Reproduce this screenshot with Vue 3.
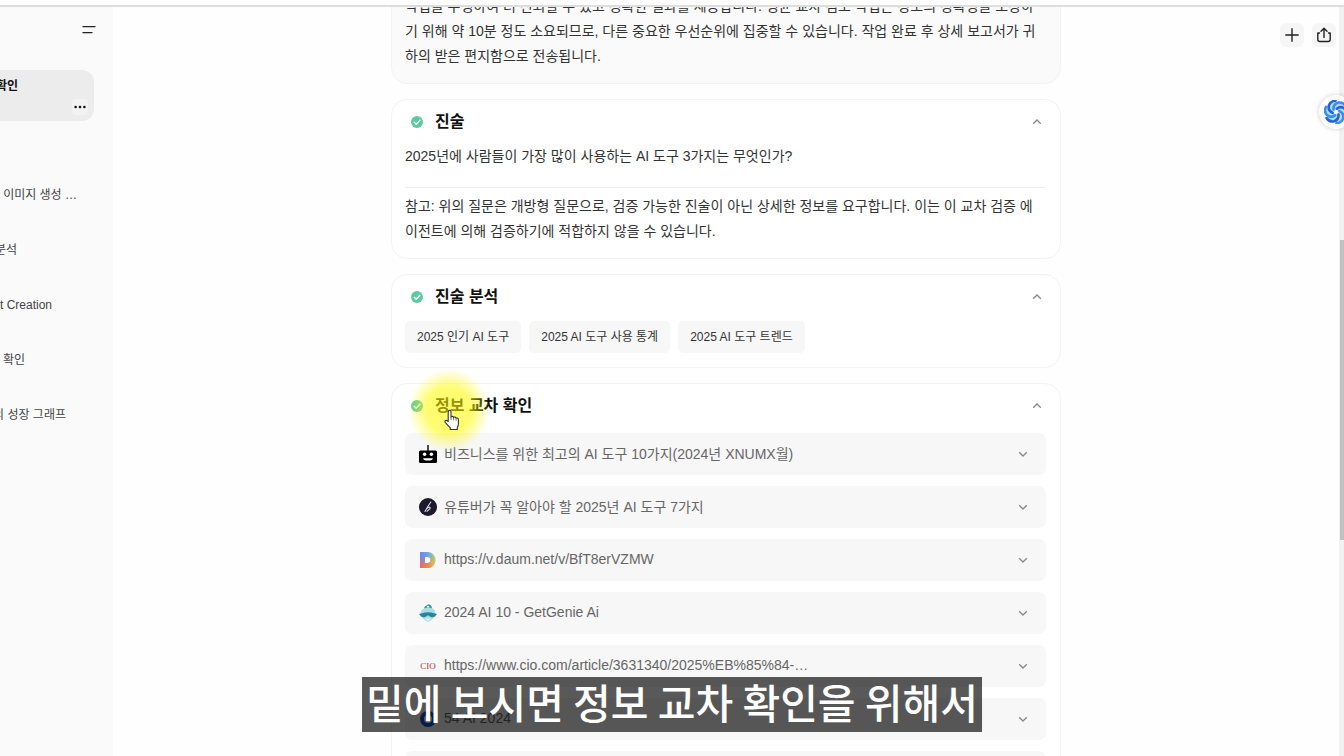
<script setup>
import { ref } from 'vue'

const history = [
  { title: '이미지 생성 …', visible: 77 },
  { title: '분석', visible: 17 },
  { title: 't Creation', visible: 52 },
  { title: '확인', visible: 25 },
  { title: '의 성장 그래프', visible: 66 },
]

const tags = ['2025 인기 AI 도구', '2025 AI 도구 사용 통계', '2025 AI 도구 트렌드']

const sources = [
  { icon: 'robot', title: '비즈니스를 위한 최고의 AI 도구 10가지(2024년 XNUMX월)' },
  { icon: 'pen', title: '유튜버가 꼭 알아야 할 2025년 AI 도구 7가지' },
  { icon: 'daum', title: 'https://v.daum.net/v/BfT8erVZMW' },
  { icon: 'genie', title: '2024 AI 10 - GetGenie Ai' },
  { icon: 'cio', title: 'https://www.cio.com/article/3631340/2025%EB%85%84-…' },
  { icon: 'ring', title: '54 AI 2024' },
  { icon: 'ring', title: 'AI 2025' },
]

const open = ref({ statement: true, analysis: true, check: true })
const toggle = (key) => {
  open.value[key] = !open.value[key]
}
</script>

<template>
  <div class="app">
    <div class="topbar"></div>
    <div class="body">
      <aside class="sidebar">
        <button class="menu" aria-label="메뉴">
          <svg width="14" height="10" viewBox="0 0 14 10">
            <path d="M1 1.6h12M1 7.6h9" stroke="#222" stroke-width="1.4" stroke-linecap="round" />
          </svg>
        </button>
        <div class="current">
          <a href="#" class="clip" :style="{ width: '18px' }"><span>확인</span></a>
          <button class="more" aria-label="더보기">
            <svg width="12" height="4" viewBox="0 0 12 4" fill="#111">
              <circle cx="1.6" cy="2" r="1.3" /><circle cx="6" cy="2" r="1.3" /><circle cx="10.4" cy="2" r="1.3" />
            </svg>
          </button>
        </div>
        <nav class="history">
          <a v-for="h in history" :key="h.title" href="#" class="clip" :style="{ width: h.visible + 'px' }">
            <span>{{ h.title }}</span>
          </a>
        </nav>
      </aside>

      <main class="main">
        <div class="column">
          <section class="card intro">
            <p>
              작업을 수행하여 더 신뢰할 수 있고 정확한 결과를 제공합니다. 평균 교차 검토 작업은 정보의 정확성을 보장하<wbr />기 위해 약 10분 정도 소요되므로, 다른 중요한 우선순위에 집중할 수 있습니다. 작업 완료 후 상세 보고서가 귀<wbr />하의 받은 편지함으로 전송됩니다.
            </p>
          </section>

          <section class="card">
            <button class="head" :aria-expanded="open.statement" @click="toggle('statement')">
              <svg class="tick" viewBox="0 0 12 12"><circle cx="6" cy="6" r="6" fill="#5cc9a0" /><path d="M3.2 6.2l2 2 3.7-4" fill="none" stroke="#fff" stroke-width="1.4" stroke-linecap="round" stroke-linejoin="round" /></svg>
              <span>진술</span>
              <svg class="chevron up" viewBox="0 0 10 10"><path d="M1.2 3.2L5 7l3.8-3.8" /></svg>
            </button>
            <div v-if="open.statement" class="text">
              <p>2025년에 사람들이 가장 많이 사용하는 AI 도구 3가지는 무엇인가?</p>
              <hr />
              <p>참고: 위의 질문은 개방형 질문으로, 검증 가능한 진술이 아닌 상세한 정보를 요구합니다. 이는 이 교차 검증 에이전트에 의해 검증하기에 적합하지 않을 수 있습니다.</p>
            </div>
          </section>

          <section class="card">
            <button class="head" :aria-expanded="open.analysis" @click="toggle('analysis')">
              <svg class="tick" viewBox="0 0 12 12"><circle cx="6" cy="6" r="6" fill="#5cc9a0" /><path d="M3.2 6.2l2 2 3.7-4" fill="none" stroke="#fff" stroke-width="1.4" stroke-linecap="round" stroke-linejoin="round" /></svg>
              <span>진술 분석</span>
              <svg class="chevron up" viewBox="0 0 10 10"><path d="M1.2 3.2L5 7l3.8-3.8" /></svg>
            </button>
            <div v-if="open.analysis" class="tags">
              <span v-for="t in tags" :key="t">{{ t }}</span>
            </div>
          </section>

          <section class="card">
            <button class="head" :aria-expanded="open.check" @click="toggle('check')">
              <svg class="tick" viewBox="0 0 12 12"><circle cx="6" cy="6" r="6" fill="#5cc9a0" /><path d="M3.2 6.2l2 2 3.7-4" fill="none" stroke="#fff" stroke-width="1.4" stroke-linecap="round" stroke-linejoin="round" /></svg>
              <span>정보 교차 확인</span>
              <svg class="chevron up" viewBox="0 0 10 10"><path d="M1.2 3.2L5 7l3.8-3.8" /></svg>
            </button>
            <div v-if="open.check" class="sources">
              <button v-for="s in sources" :key="s.title" class="source">
                <svg v-if="s.icon === 'robot'" class="icon" viewBox="0 0 18 18">
                  <path d="M9 0v6" stroke="#000" stroke-width="1.4" />
                  <rect x="0" y="5.5" width="18" height="12.5" rx="1.5" />
                  <circle cx="5.6" cy="9.2" r="1.7" fill="#fff" /><circle cx="12.4" cy="9.2" r="1.7" fill="#fff" />
                  <path d="M4 13.3h10q-.6 2.2-3 2.2H7q-2.4 0-3-2.2z" fill="#fff" />
                </svg>
                <svg v-else-if="s.icon === 'pen'" class="icon" viewBox="0 0 18 18">
                  <circle cx="9" cy="9" r="9" fill="#1c1a2b" />
                  <path d="M6 13.5Q8 9.5 11.8 4M7.6 11q2.4-2.6 3.4-1.600t-3 3.800" fill="none" stroke="#dcdae6" stroke-width="1.100" stroke-linecap="round" />
                </svg>
                <svg v-else-if="s.icon === 'daum'" class="icon" viewBox="0 0 18 18">
                  <defs>
                    <linearGradient id="daumTop" x1="0" y1="0" x2="1" y2="0"><stop offset="0" stop-color="#6a86ee" /><stop offset=".5" stop-color="#6fa6de" /><stop offset="1" stop-color="#b9cf66" /></linearGradient>
                    <linearGradient id="daumLow" x1="0" y1="0" x2="1" y2="0"><stop offset="0" stop-color="#ea6a6f" /><stop offset=".5" stop-color="#f0854e" /><stop offset="1" stop-color="#f5c33b" /></linearGradient>
                    <linearGradient id="daumFade" x1="0" y1="0" x2="0" y2="1"><stop offset=".3" stop-color="#fff" stop-opacity="0" /><stop offset=".8" stop-color="#fff" /></linearGradient>
                    <mask id="daumMask"><rect width="18" height="18" fill="url(#daumFade)" /></mask>
                  </defs>
                  <path d="M1 1h7.500a8 8 0 0 1 0 16H1zM6 6v6h2.400a3 3 0 0 0 0-6z" fill="url(#daumTop)" fill-rule="evenodd" />
                  <path d="M1 1h7.500a8 8 0 0 1 0 16H1zM6 6v6h2.400a3 3 0 0 0 0-6z" fill="url(#daumLow)" fill-rule="evenodd" mask="url(#daumMask)" />
                </svg>
                <svg v-else-if="s.icon === 'genie'" class="icon" viewBox="0 0 18 18">
                  <path d="M1.500 9Q2.500 4 9 3.500T16.500 9q0 5-7.500 9-7.500-4-7.500-9z" fill="#a9dce4" />
                  <path d="M5 4.500Q6 1 8 1.500 9-.500 11 .800q1.800 1 2 3.500Q9 2.500 5 4.500z" fill="#2492ac" />
                  <path d="M7.500 2.500l1.500-1 1.500 1L9 4z" fill="#dff5f7" />
                  <path d="M0 10l3-.8Q9 7.300 15 9.200l3 .8-2 2.500q-3 1.600-5 0L9 11.300 7 12.500q-2 1.600-5 0z" fill="#26849c" />
                  <path d="M6 14q3 1.500 6 0-.8 1.800-3 2.800Q6.800 15.800 6 14z" fill="#eef9fa" />
                </svg>
                <svg v-else-if="s.icon === 'cio'" class="icon" viewBox="0 0 18 18">
                  <text x="9" y="12" text-anchor="middle" class="cio">CIO</text>
                </svg>
                <svg v-else class="icon" viewBox="0 0 18 18">
                  <circle cx="9" cy="9" r="6" fill="none" stroke="#1d4fc4" stroke-width="4" />
                </svg>
                <span>{{ s.title }}</span>
                <svg class="chevron" viewBox="0 0 10 10"><path d="M1.200 3.200L5 7l3.800-3.800" /></svg>
              </button>
            </div>
            <div class="pointer">
              <svg width="16" height="22" viewBox="0 0 16 22">
                <path d="M4.200 12.500V2.800q0-1.600 1.400-1.600T7 2.800v5.400q.3-.9 1.400-.8 1.100.1 1.200 1.200.4-.7 1.400-.5 1 .2 1.100 1.200.4-.5 1.300-.2 1 .4 1 1.600v4q0 2.200-1.100 3.600v2.200H6.200v-1.900Q4 16.800 1.300 13.400q-.8-1.300.2-1.900 1-.5 2.700 1z" fill="#fff" stroke="#333" stroke-width="1.100" stroke-linejoin="round" />
                <path d="M7 8.200v3M9.600 9v2.400M12.100 9.700v2" stroke="#555" stroke-width=".8" />
              </svg>
            </div>
          </section>
        </div>

        <div class="actions">
          <button aria-label="새로 만들기">
            <svg width="14" height="14" viewBox="0 0 14 14"><path d="M7 .800v12.400M.800 7h12.400" stroke="#222" stroke-width="1.400" stroke-linecap="round" /></svg>
          </button>
          <button aria-label="공유">
            <svg width="16" height="16" viewBox="0 0 16 16" fill="none" stroke="#222" stroke-width="1.400" stroke-linecap="round" stroke-linejoin="round"><path d="M8 10.500V1.500M5 4.200l3-3 3 3M3.500 6H1.800v6.500q0 2 2 2h8.400q2 0 2-2V6h-1.700" /></svg>
          </button>
        </div>
      </main>

      <div class="scrollbar"><div class="thumb"></div></div>
    </div>

    <button class="assistant" aria-label="도우미">
      <svg width="24" height="24" viewBox="-12 -12 24 24" fill="none" stroke-linecap="round">
        <circle r="10" fill="#b9d6fa" />
        <g v-for="a in 6" :key="a" :transform="`rotate(${a * 60})`">
          <path d="M-2.500 -2.500Q-3 -8 2.500 -9.500Q7 -10 9.500 -6" :stroke="a % 2 ? '#1f66d6' : '#3a8eee'" stroke-width="2.600" />
        </g>
        <circle r="1.800" fill="#fff" />
      </svg>
    </button>

    <div class="caption">밑에 보시면 정보 교차 확인을 위해서</div>
  </div>
</template>

<style>
body {
  background: #fff;
  overflow: hidden;
}
</style>

<style scoped>
.app {
  position: relative;
  display: flex;
  flex-direction: column;
  height: 100vh;
  overflow: hidden;
  background: #fefefe;
  color: #333;
  font-family: "Liberation Sans", "Noto Sans CJK KR", sans-serif;
  font-size: 14px;
}
button {
  border: 0;
  padding: 0;
  margin: 0;
  background: none;
  font: inherit;
  color: inherit;
  cursor: pointer;
}
a {
  color: inherit;
  text-decoration: none;
}
p {
  margin: 0;
}
svg {
  display: block;
  flex: none;
}
.topbar {
  flex: none;
  height: 5px;
  background: #fff;
  border-bottom: 2px solid #dedede;
}
.body {
  flex: 1;
  min-height: 0;
  display: flex;
}

.sidebar {
  flex: none;
  width: 113px;
  background: #fafafa;
  font-size: 12px;
}
.menu {
  display: block;
  margin: 18px 17px 0 auto;
}
.current {
  display: flex;
  flex-direction: column;
  margin: 35px 19px 0 0;
  padding: 7px 6px 6px 0;
  border-radius: 0 12px 12px 0;
  background: #ececec;
  color: #111;
  font-weight: 700;
}
.clip {
  display: flex;
  justify-content: flex-end;
  overflow: hidden;
  white-space: nowrap;
  line-height: 19px;
}
.clip span {
  flex: none;
}
.more {
  display: flex;
  align-items: center;
  justify-content: center;
  align-self: flex-end;
  width: 16px;
  height: 16px;
  margin-top: 3px;
  border-radius: 4px;
  background: #f2f2f2;
}
.history {
  display: flex;
  flex-direction: column;
  gap: 36px;
  padding-top: 65px;
  color: #444;
}

.main {
  position: relative;
  flex: 1;
  min-width: 0;
  overflow: hidden;
}
.column {
  display: flex;
  flex-direction: column;
  gap: 15px;
  max-width: 670px;
  margin: -28px auto 0;
}
.card {
  position: relative;
  padding: 10px 14px 14px 13px;
  border: 1px solid #f3f3f3;
  border-radius: 16px;
  background: #fff;
}
.intro {
  padding-top: 14px;
  background: #fafafa;
}
.card p {
  padding-right: 4px;
  line-height: 25px;
  word-break: break-all;
}
.head {
  display: flex;
  align-items: center;
  width: 100%;
  height: 24px;
  padding: 0 4px 0 6px;
  color: #111;
  font-size: 16px;
  font-weight: 700;
}
.head span {
  padding-bottom: 4px;
}
.tick {
  width: 12px;
  height: 12px;
  margin-right: 12px;
}
.chevron {
  width: 10px;
  height: 10px;
  margin-left: auto;
  fill: none;
  stroke: #888;
  stroke-width: 1.3;
}
.up {
  transform: rotate(180deg);
}
.text {
  padding-top: 10px;
}
.text hr {
  height: 1px;
  margin: 18px 0 6px;
  border: 0;
  background: #ededed;
}
.tags {
  display: flex;
  gap: 8px;
  padding-top: 12px;
  font-size: 12px;
}
.tags span {
  padding: 0 12px;
  border-radius: 5px;
  background: #f7f7f7;
  line-height: 32px;
}
.sources {
  display: flex;
  flex-direction: column;
  gap: 11px;
  padding-top: 15px;
}
.source {
  display: flex;
  align-items: center;
  gap: 7px;
  height: 42px;
  padding: 0 18px 0 14px;
  border-radius: 7px;
  background: #f7f7f7;
  color: #666;
}
.source span {
  padding-bottom: 2px;
}
.icon {
  width: 18px;
  height: 18px;
}
.cio {
  font-family: "Liberation Serif", serif;
  font-size: 9px;
  fill: #c4323c;
}
.pointer {
  position: absolute;
  top: -15px;
  left: 16px;
  display: flex;
  align-items: center;
  justify-content: center;
  width: 82px;
  height: 82px;
  padding-top: 20px;
  padding-left: 6px;
  box-sizing: border-box;
  background: radial-gradient(closest-side, rgba(255, 250, 0, 0.56) 55%, rgba(255, 250, 0, 0.3) 76%, rgba(255, 250, 0, 0));
  pointer-events: none;
}

.actions {
  position: absolute;
  top: 16px;
  right: 3px;
  display: flex;
  gap: 8px;
}
.actions button {
  display: flex;
  align-items: center;
  justify-content: center;
  width: 24px;
  height: 24px;
  border-radius: 6px;
  background: #f6f6f6;
}
.scrollbar {
  flex: none;
  width: 4px;
  padding-left: 1px;
  background: #f1f1f1;
}
.thumb {
  height: 40%;
  margin-top: 233px;
  background: #c1c1c1;
}
.assistant {
  position: absolute;
  top: 95px;
  right: -9px;
  display: flex;
  align-items: center;
  justify-content: center;
  width: 34px;
  height: 34px;
  border-radius: 50%;
  background: #fff;
  box-shadow: 0 0 4px rgba(0, 0, 0, 0.2);
}
.caption {
  position: absolute;
  bottom: 24px;
  left: 50%;
  transform: translateX(-50%);
  padding: 0 4px 6px;
  background: rgba(0, 0, 0, 0.65);
  color: #fff;
  font-family: "Noto Sans CJK KR", sans-serif;
  font-size: 41px;
  font-weight: 500;
  line-height: 49px;
  white-space: nowrap;
}
</style>
